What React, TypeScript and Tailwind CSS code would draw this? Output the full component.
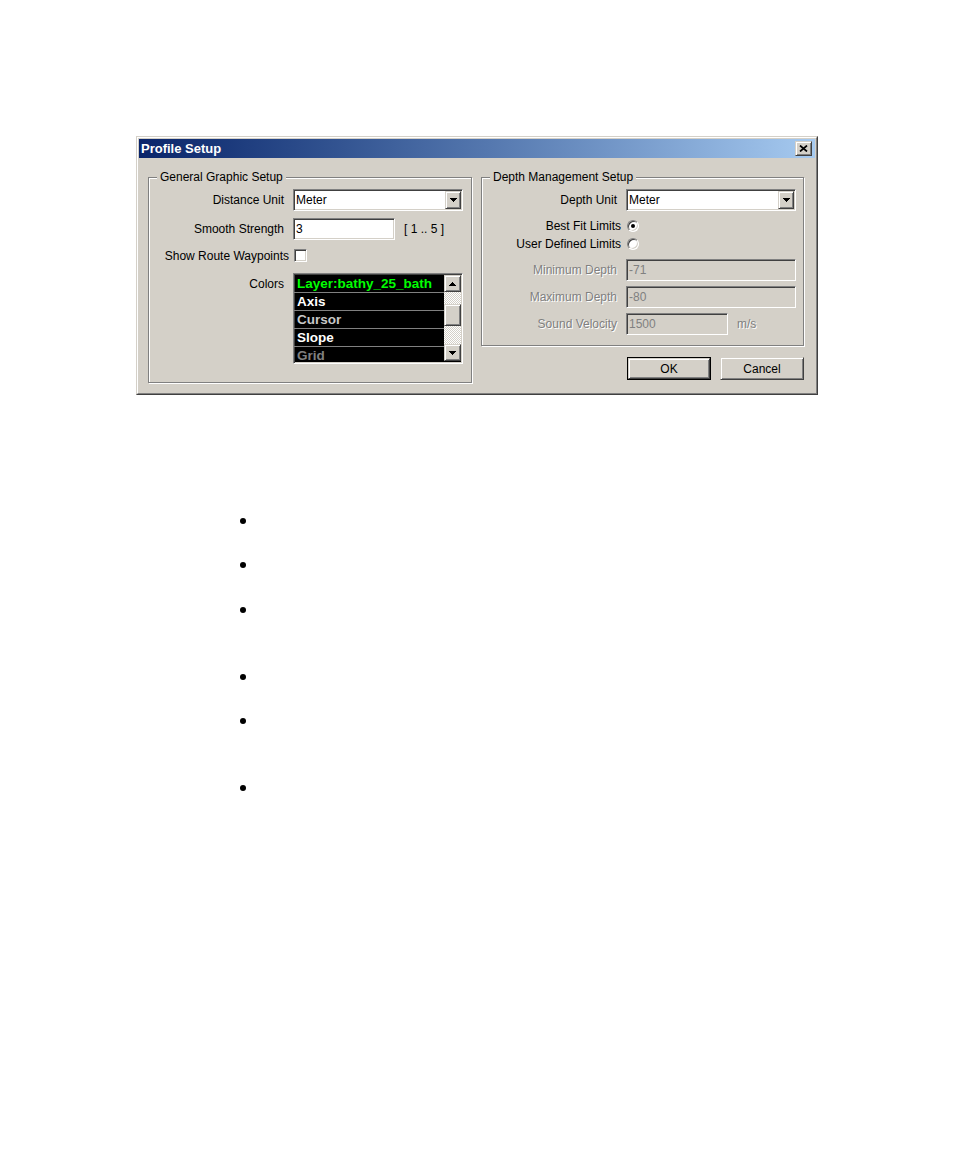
import React from "react";

// Win2000 style 3D frames
const sunken =
  "border border-t-[#808080] border-l-[#808080] border-b-white border-r-white shadow-[inset_1px_1px_0_#404040,inset_-1px_-1px_0_#d4d0c8]";
const raised =
  "border border-t-[#d4d0c8] border-l-[#d4d0c8] border-b-[#404040] border-r-[#404040] shadow-[inset_1px_1px_0_#fff,inset_-1px_-1px_0_#808080]";
const disabledText = "text-[#808080] [text-shadow:1px_1px_0_#fff]";

function ArrowDown() {
  return (
    <svg width="7" height="4" viewBox="0 0 7 4" shapeRendering="crispEdges">
      <path d="M0 0h7v1H0zM1 1h5v1H1zM2 2h3v1H2zM3 3h1v1H3z" fill="#000" />
    </svg>
  );
}

function ArrowUp() {
  return (
    <svg width="7" height="4" viewBox="0 0 7 4" shapeRendering="crispEdges">
      <path d="M3 0h1v1H3zM2 1h3v1H2zM1 2h5v1H1zM0 3h7v1H0z" fill="#000" />
    </svg>
  );
}

function ComboBox({ value }: { value: string }) {
  return (
    <div className={`flex h-[22px] w-[170px] items-center bg-white ${sunken}`}>
      <span className="flex-1 pl-[2px] leading-[14px]">{value}</span>
      <span className={`mr-px grid h-[18px] w-[16px] place-items-center bg-[#d4d0c8] ${raised}`}>
        <ArrowDown />
      </span>
    </div>
  );
}

function TextBox({
  value,
  className,
  disabled,
}: {
  value: string;
  className: string;
  disabled?: boolean;
}) {
  return (
    <div
      className={`flex h-[22px] items-center pl-[2px] leading-[14px] ${sunken} ${
        disabled ? "bg-[#d4d0c8] text-[#808080]" : "bg-white"
      } ${className}`}
    >
      {value}
    </div>
  );
}

function Radio({ checked }: { checked?: boolean }) {
  return (
    <span className="grid h-[12px] w-[12px] place-items-center rounded-full border border-t-[#808080] border-l-[#808080] border-b-white border-r-white bg-white shadow-[inset_1px_1px_0_#404040,inset_-1px_-1px_0_#d4d0c8]">
      {checked && <span className="h-[4px] w-[4px] rounded-full bg-black" />}
    </span>
  );
}

function GroupBox({
  title,
  className,
  children,
}: {
  title: string;
  className: string;
  children: React.ReactNode;
}) {
  return (
    <div
      className={`relative border border-[#808080] shadow-[1px_1px_0_#fff,inset_1px_1px_0_#fff] ${className}`}
    >
      <span className="absolute -top-[8px] left-[8px] bg-[#d4d0c8] px-[3px] leading-[14px]">
        {title}
      </span>
      {children}
    </div>
  );
}

const colorRows = [
  { label: "Layer:bathy_25_bath", color: "text-[#00ff00]" },
  { label: "Axis", color: "text-white" },
  { label: "Cursor", color: "text-[#c8c8c8]" },
  { label: "Slope", color: "text-white" },
  { label: "Grid", color: "text-[#808080]" },
];

function ColorList() {
  return (
    <div className={`flex h-[91px] w-[170px] bg-black ${sunken}`}>
      <div className="flex-1 overflow-hidden pt-px">
        {colorRows.map((row) => (
          <div
            key={row.label}
            className={`h-[18px] whitespace-nowrap border-b border-[#808080] pl-[3px] text-[13.5px] font-bold leading-[17px] ${row.color}`}
          >
            {row.label}
          </div>
        ))}
      </div>
      <div className="mr-px mt-px flex w-[17px] flex-col">
        <span className={`grid h-[17px] place-items-center bg-[#d4d0c8] ${raised}`}>
          <ArrowUp />
        </span>
        <span className="h-[12px] bg-[repeating-conic-gradient(#fff_0_25%,#d4d0c8_0_50%)] bg-[length:2px_2px]" />
        <span className={`h-[22px] bg-[#d4d0c8] ${raised}`} />
        <span className="h-[18px] bg-[repeating-conic-gradient(#fff_0_25%,#d4d0c8_0_50%)] bg-[length:2px_2px]" />
        <span className={`grid h-[17px] place-items-center bg-[#d4d0c8] ${raised}`}>
          <ArrowDown />
        </span>
      </div>
    </div>
  );
}

function ProfileSetupDialog() {
  return (
    <div className="ml-[136px] w-[682px] border border-t-[#d4d0c8] border-l-[#d4d0c8] border-r-[#404040] border-b-[#404040] bg-[#d4d0c8]">
      <div className="border border-t-white border-l-white border-r-[#808080] border-b-[#808080] p-px">
        {/* title bar */}
        <div className="flex h-[19px] items-center justify-between bg-linear-to-r from-[#0a246a] to-[#a6caf0] pl-[2px] pr-[3px]">
          <span className="text-[13px] font-bold leading-none text-white">Profile Setup</span>
          <button
            type="button"
            aria-label="Close"
            className={`grid h-[15px] w-[17px] place-items-center bg-[#d4d0c8] ${raised}`}
          >
            <svg width="9" height="7" viewBox="0 0 9 7">
              <path d="M1 0.5 8 6.5M8 0.5 1 6.5" stroke="#000" strokeWidth="1.7" />
            </svg>
          </button>
        </div>

        <div className="flex gap-[9px] pb-[9px] pl-[9px] pr-[11px] pt-[19px]">
          {/* General Graphic Setup */}
          <GroupBox title="General Graphic Setup" className="w-[324px] pb-[18px] pl-[7px] pt-[11px]">
            <div className="flex h-[22px] items-center gap-[9px]">
              <span className="w-[128px] text-right leading-[14px]">Distance Unit</span>
              <ComboBox value="Meter" />
            </div>
            <div className="mt-[7px] flex h-[22px] items-center gap-[9px]">
              <span className="w-[128px] text-right leading-[14px]">Smooth Strength</span>
              <TextBox value="3" className="w-[102px]" />
              <span className="leading-[14px]">[ 1 .. 5 ]</span>
            </div>
            <div className="mt-[9px] flex h-[13px] items-center gap-[5px]">
              <span className="w-[133px] whitespace-nowrap text-right leading-[14px]">
                Show Route Waypoints
              </span>
              <span className={`h-[13px] w-[13px] bg-white ${sunken}`} />
            </div>
            <div className="mt-[11px] flex items-start gap-[9px]">
              <span className="w-[128px] pt-[4px] text-right leading-[14px]">Colors</span>
              <ColorList />
            </div>
          </GroupBox>

          {/* right column */}
          <div className="flex w-[323px] flex-col">
            <GroupBox title="Depth Management Setup" className="pb-[10px] pl-[7px] pt-[11px]">
              <div className="flex h-[22px] items-center gap-[9px]">
                <span className="w-[128px] text-right leading-[14px]">Depth Unit</span>
                <ComboBox value="Meter" />
              </div>
              <div className="mt-[9px] flex h-[12px] items-center gap-[6px]">
                <span className="w-[132px] whitespace-nowrap text-right leading-[14px]">Best Fit Limits</span>
                <Radio checked />
              </div>
              <div className="mt-[6px] flex h-[12px] items-center gap-[6px]">
                <span className="w-[132px] whitespace-nowrap text-right leading-[14px]">User Defined Limits</span>
                <Radio />
              </div>
              <div className="mt-[9px] flex h-[22px] items-center gap-[9px]">
                <span className={`w-[128px] text-right leading-[14px] ${disabledText}`}>Minimum Depth</span>
                <TextBox value="-71" className="w-[170px]" disabled />
              </div>
              <div className="mt-[5px] flex h-[22px] items-center gap-[9px]">
                <span className={`w-[128px] text-right leading-[14px] ${disabledText}`}>Maximum Depth</span>
                <TextBox value="-80" className="w-[170px]" disabled />
              </div>
              <div className="mt-[5px] flex h-[22px] items-center gap-[9px]">
                <span className={`w-[128px] text-right leading-[14px] ${disabledText}`}>Sound Velocity</span>
                <TextBox value="1500" className="w-[102px]" disabled />
                <span className={`leading-[14px] ${disabledText}`}>m/s</span>
              </div>
            </GroupBox>

            <div className="mt-[11px] flex justify-end gap-[9px]">
              <button type="button" className="h-[23px] w-[84px] border border-black bg-[#d4d0c8]">
                <span className={`flex h-full w-full items-center justify-center leading-[14px] ${raised}`}>
                  OK
                </span>
              </button>
              <button
                type="button"
                className={`flex h-[23px] w-[84px] items-center justify-center bg-[#d4d0c8] leading-[14px] ${raised}`}
              >
                Cancel
              </button>
            </div>
          </div>
        </div>
      </div>
    </div>
  );
}

// spacing between bullet dots as laid out on the page
const bullets = [
  { id: 1, h: "h-[44px]" },
  { id: 2, h: "h-[45px]" },
  { id: 3, h: "h-[67px]" },
  { id: 4, h: "h-[44px]" },
  { id: 5, h: "h-[67px]" },
  { id: 6, h: "h-[44px]" },
];

export default function App() {
  return (
    <div className="min-h-[1159px] bg-white pt-[136px] font-['Liberation_Sans',Arial,sans-serif] text-[12px] text-black">
      <ProfileSetupDialog />
      <ul className="mt-[123px] pl-[240px]">
        {bullets.map((b) => (
          <li key={b.id} className={b.h}>
            <span className="block h-[6px] w-[6px] rounded-full bg-black" />
          </li>
        ))}
      </ul>
    </div>
  );
}
